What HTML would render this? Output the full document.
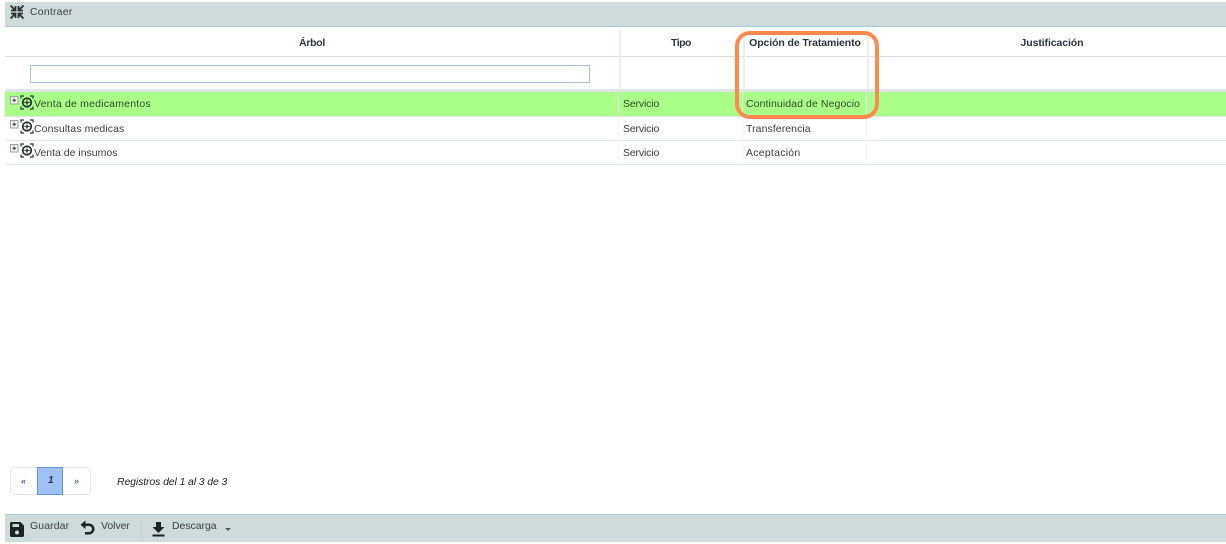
<!DOCTYPE html>
<html lang="es"><head><meta charset="utf-8"><title>Árbol</title>
<style>
html,body{margin:0;padding:0;background:#fff;width:1226px;height:544px;overflow:hidden}
body{position:relative;font-family:"Liberation Sans",sans-serif;font-size:10.5px;color:#3c3c46}
.a{position:absolute}
.t{position:absolute;white-space:nowrap;line-height:14px;letter-spacing:.1px}
.h{position:absolute;white-space:nowrap;line-height:14px;font-weight:bold;color:#2c3444;letter-spacing:-.1px;text-align:center}
.ic{position:absolute}
</style></head><body>
<div class="a" style="left:5px;top:2px;width:1221px;height:24px;background:#cddbdb"></div>
<div class="a" style="left:5px;top:26px;width:1221px;height:1px;background:#a9c9de"></div>
<svg class="ic" style="left:10px;top:5px" width="14" height="14" viewBox="0 0 14 14" fill="none" stroke="#2a2f33" stroke-width="1.800"><path d="M.5 .5 5 5M5.500 1V5.500H1M13.500 .5 9 5M8.500 1V5.500H13M.5 13.500 5 9M5.500 13V8.500H1M13.500 13.500 9 9M8.500 13V8.500H13"/></svg>
<div class="t" style="left:30px;top:5px;letter-spacing:.2px">Contraer</div>

<div class="h" style="left:5px;width:612px;top:36px;letter-spacing:-.3px;padding-left:1px">Árbol</div>
<div class="h" style="left:619px;width:124px;top:36px;letter-spacing:-.5px">Tipo</div>
<div class="h" style="left:743px;width:124px;top:36px">Opción de Tratamiento</div>
<div class="h" style="left:867px;width:370px;top:36px">Justificación</div>
<div class="a" style="left:5px;top:56px;width:1221px;height:1px;background:#d5e2e2"></div>
<div class="a" style="left:5px;top:89px;width:1221px;height:3px;background:#dfe6e6"></div>
<div class="a" style="left:619px;top:29px;width:2px;height:60px;background:#e9f0f0"></div>
<div class="a" style="left:743px;top:29px;width:2px;height:60px;background:#e9f0f0"></div>
<div class="a" style="left:867px;top:29px;width:2px;height:60px;background:#e9f0f0"></div>
<div class="a" style="left:30px;top:65px;width:558px;height:16px;border:1px solid #a4c2dc;background:#fff"></div>

<div class="a" style="left:5px;top:92px;width:1221px;height:24px;background:#aaff88"></div>
<div class="a" style="left:5px;top:116px;width:1221px;height:1px;background:#dfe6e6"></div>
<div class="a" style="left:5px;top:140px;width:1221px;height:1px;background:#dfe6e6"></div>
<div class="a" style="left:5px;top:164px;width:1221px;height:1px;background:#dfe6e6"></div>
<div class="a" style="left:618px;top:92px;width:1px;height:72px;background:#f2f5f5"></div>
<div class="a" style="left:742px;top:92px;width:1px;height:72px;background:#f2f5f5"></div>
<div class="a" style="left:866px;top:92px;width:1px;height:72px;background:#f2f5f5"></div>

<svg width="0" height="0" style="position:absolute"><defs><symbol id="n" viewBox="0 0 24 16"><rect x=".5" y="1.500" width="7.500" height="7.500" fill="#eef0ee" stroke="#9a9f9f"/><path d="M2.500 5.200h3.500M4.200 3.500v3.500" stroke="#333" stroke-width="1"/><circle cx="17" cy="7.500" r="4.300" fill="none" stroke="#2a3034" stroke-width="1.700"/><circle cx="17" cy="7.500" r="1.300" fill="#2a3034"/><path d="M17 3.500v8M13 7.500h8" stroke="#2a3034" stroke-width=".7"/><path d="M11 3.500V1h3M20 1h3v2.500M11 11.500V14h3M20 14h3v-2.500" fill="none" stroke="#2a3034" stroke-width="1.200"/></symbol></defs></svg>
<svg class="ic" style="left:10px;top:95px" width="24" height="16"><use href="#n"/></svg>
<svg class="ic" style="left:10px;top:119px" width="24" height="16"><use href="#n"/></svg>
<svg class="ic" style="left:10px;top:143px" width="24" height="16"><use href="#n"/></svg>

<div class="t" style="left:34px;top:97px;color:#2f4a2a;letter-spacing:.2px">Venta de medicamentos</div>
<div class="t" style="left:34px;top:121.500px;letter-spacing:.1px">Consultas medicas</div>
<div class="t" style="left:34px;top:145.500px;letter-spacing:0">Venta de insumos</div>
<div class="t" style="left:623px;top:97px;color:#2f4a2a;letter-spacing:-.15px">Servicio</div>
<div class="t" style="left:623px;top:121.500px;letter-spacing:-.15px">Servicio</div>
<div class="t" style="left:623px;top:145.500px;letter-spacing:-.15px">Servicio</div>
<div class="t" style="left:746px;top:97px;color:#2f4a2a;letter-spacing:.09px">Continuidad de Negocio</div>
<div class="t" style="left:746px;top:121.500px;letter-spacing:.07px">Transferencia</div>
<div class="t" style="left:746px;top:145.500px;letter-spacing:.25px">Aceptación</div>

<div class="a" style="left:735px;top:31px;width:136px;height:80px;border:4px solid #ff8a50;border-radius:15px"></div>

<div class="a" style="left:10px;top:467px;width:79px;height:26px;border:1px solid #e2e6e6;border-radius:4px;background:#fff"></div>
<div class="a" style="left:37px;top:467px;width:24px;height:26px;background:#9fc1f8;border:1px solid #5f95d8"></div>
<div class="t" style="left:21px;top:474px;font-size:9px;font-weight:bold;font-style:italic;color:#4a6a9a">«</div>
<div class="t" style="left:48px;top:474px;font-size:10px;font-weight:bold;font-style:italic;color:#25384f">1</div>
<div class="t" style="left:74px;top:474px;font-size:9px;font-weight:bold;font-style:italic;color:#4a6a9a">»</div>
<div class="t" style="left:117px;top:475px;font-style:italic;color:#222;letter-spacing:-.12px">Registros del 1 al 3 de 3</div>

<div class="a" style="left:5px;top:514px;width:1221px;height:1px;background:#a9c9de"></div>
<div class="a" style="left:5px;top:515px;width:1221px;height:27px;background:#cddbdb"></div>
<svg class="ic" style="left:10px;top:522px" width="14" height="15" viewBox="0 0 14 15"><path d="M1.500 0H10.500L14 3.500V13.500A1.500 1.500 0 0 1 12.500 15H1.500A1.500 1.500 0 0 1 0 13.500V1.500A1.500 1.500 0 0 1 1.500 0z" fill="#1d2327"/><rect x="2.500" y="2" width="6.500" height="3" fill="#cddbdb"/><circle cx="7" cy="10.500" r="2" fill="#cddbdb"/></svg>
<div class="t" style="left:30px;top:519px;letter-spacing:.1px">Guardar</div>
<svg class="ic" style="left:80px;top:520px" width="15" height="16" viewBox="0 0 15 16"><path d="M5.500 0.500V3.500H9A5.500 5.500 0 0 1 9 14.500H5V12H9A3 3 0 0 0 9 6H5.500V9L0.500 4.800z" fill="#1d2327"/></svg>
<div class="t" style="left:101px;top:519px;letter-spacing:-.05px">Volver</div>
<div class="a" style="left:141px;top:520px;width:1px;height:18px;background:#bccfd4"></div>
<svg class="ic" style="left:152px;top:522px" width="13" height="15" viewBox="0 0 13 15"><path d="M4 0H9V5H12.500L6.500 11L0.500 5H4zM0.500 12.500H12.500V14.500H0.500z" fill="#1d2327"/></svg>
<div class="t" style="left:172px;top:519px;letter-spacing:-.05px">Descarga</div>
<div class="a" style="left:225px;top:528px;width:0;height:0;border-left:3.500px solid transparent;border-right:3.500px solid transparent;border-top:3px solid #555"></div>
</body></html>
